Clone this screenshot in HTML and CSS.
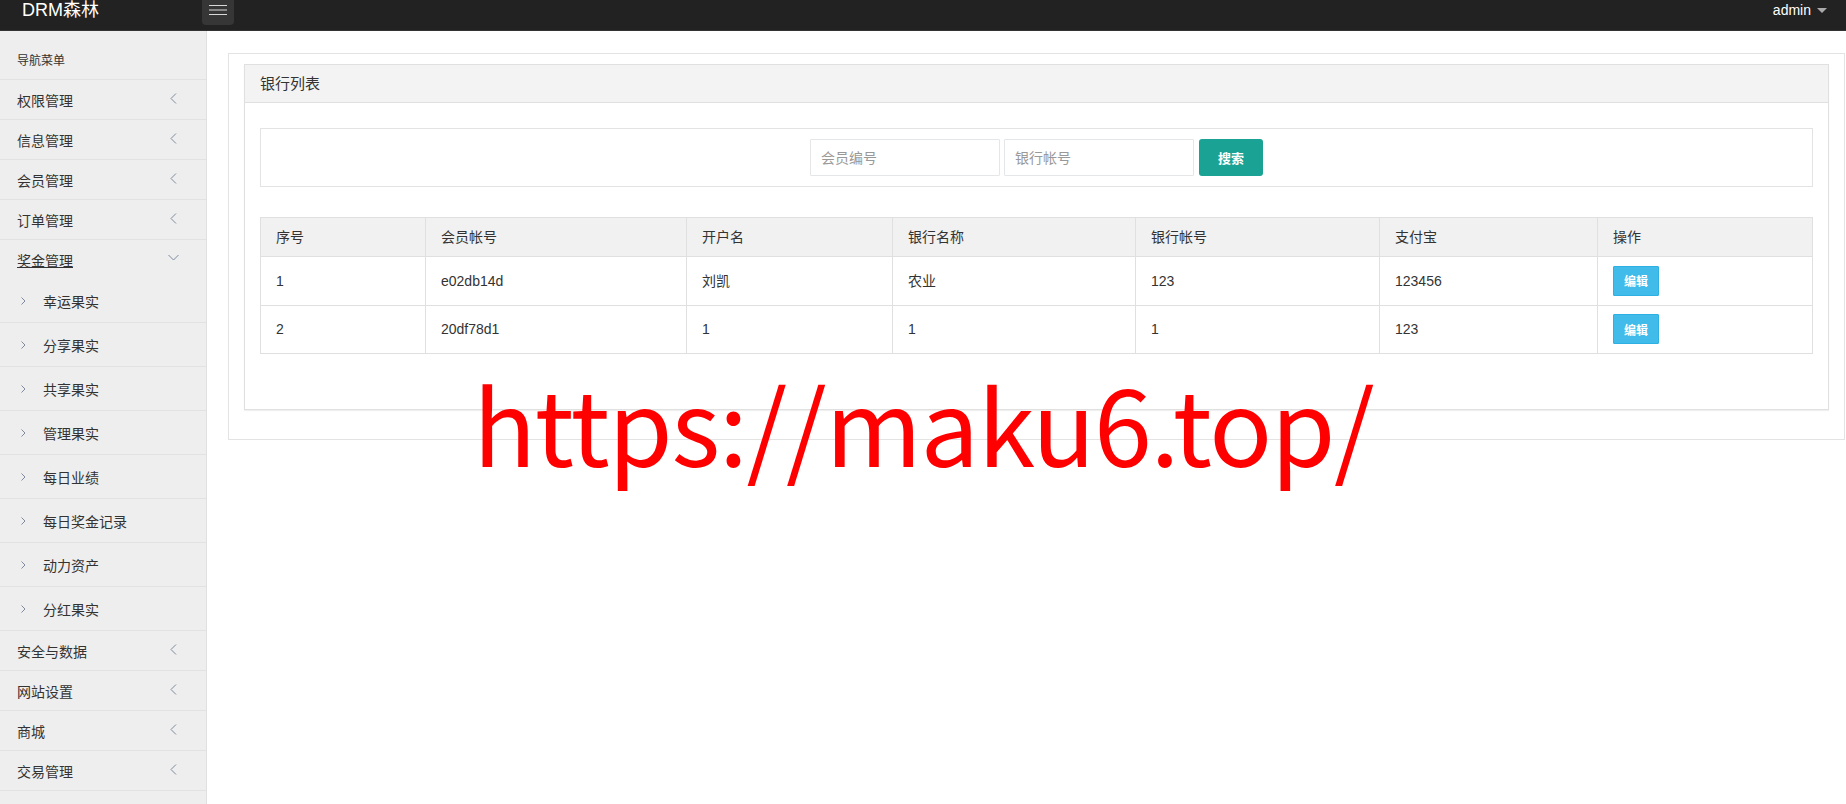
FILE: index.html
```html
<!DOCTYPE html>
<html lang="zh-CN">
<head>
  <meta charset="UTF-8">
  <title>DRM森林 - 银行列表</title>
  <link rel="stylesheet" href="styles.css">
</head>
<body>

  <header class="topbar">
    <a href="#" class="brand">DRM森林</a>
    <button type="button" class="nav-toggle">
      <svg width="18" height="11" viewBox="0 0 18 11">
        <path d="M0 0.5H18M0 5H18M0 9.5H18" stroke="#d8d8d8" stroke-width="1.2"/>
      </svg>
    </button>
    <div class="user">admin<span class="caret"></span></div>
  </header>

  <div class="layout">
    <aside class="sidebar">
      <div class="nav-title">导航菜单</div>
      <ul class="nav">
        <li class="nav-item"><a href="#"><span>权限管理</span><svg class="arrow" width="7" height="11" viewBox="0 0 7 11"><path d="M6 0.5L1 5.5L6 10.5"/></svg></a></li>
        <li class="nav-item"><a href="#"><span>信息管理</span><svg class="arrow" width="7" height="11" viewBox="0 0 7 11"><path d="M6 0.5L1 5.5L6 10.5"/></svg></a></li>
        <li class="nav-item"><a href="#"><span>会员管理</span><svg class="arrow" width="7" height="11" viewBox="0 0 7 11"><path d="M6 0.5L1 5.5L6 10.5"/></svg></a></li>
        <li class="nav-item"><a href="#"><span>订单管理</span><svg class="arrow" width="7" height="11" viewBox="0 0 7 11"><path d="M6 0.5L1 5.5L6 10.5"/></svg></a></li>
        <li class="nav-item open">
          <a href="#"><span class="current">奖金管理</span><svg class="arrow-down" width="11" height="7" viewBox="0 0 11 7"><path d="M0.5 1L5.5 6L10.5 1"/></svg></a>
          <ul class="sub-nav">
            <li><a href="#"><svg width="5" height="8" viewBox="0 0 5 8"><path d="M0.5 0.5L4 4L0.5 7.5"/></svg>幸运果实</a></li>
            <li><a href="#"><svg width="5" height="8" viewBox="0 0 5 8"><path d="M0.5 0.5L4 4L0.5 7.5"/></svg>分享果实</a></li>
            <li><a href="#"><svg width="5" height="8" viewBox="0 0 5 8"><path d="M0.5 0.5L4 4L0.5 7.5"/></svg>共享果实</a></li>
            <li><a href="#"><svg width="5" height="8" viewBox="0 0 5 8"><path d="M0.5 0.5L4 4L0.5 7.5"/></svg>管理果实</a></li>
            <li><a href="#"><svg width="5" height="8" viewBox="0 0 5 8"><path d="M0.5 0.5L4 4L0.5 7.5"/></svg>每日业绩</a></li>
            <li><a href="#"><svg width="5" height="8" viewBox="0 0 5 8"><path d="M0.5 0.5L4 4L0.5 7.5"/></svg>每日奖金记录</a></li>
            <li><a href="#"><svg width="5" height="8" viewBox="0 0 5 8"><path d="M0.5 0.5L4 4L0.5 7.5"/></svg>动力资产</a></li>
            <li><a href="#"><svg width="5" height="8" viewBox="0 0 5 8"><path d="M0.5 0.5L4 4L0.5 7.5"/></svg>分红果实</a></li>
          </ul>
        </li>
        <li class="nav-item"><a href="#"><span>安全与数据</span><svg class="arrow" width="7" height="11" viewBox="0 0 7 11"><path d="M6 0.5L1 5.5L6 10.5"/></svg></a></li>
        <li class="nav-item"><a href="#"><span>网站设置</span><svg class="arrow" width="7" height="11" viewBox="0 0 7 11"><path d="M6 0.5L1 5.5L6 10.5"/></svg></a></li>
        <li class="nav-item"><a href="#"><span>商城</span><svg class="arrow" width="7" height="11" viewBox="0 0 7 11"><path d="M6 0.5L1 5.5L6 10.5"/></svg></a></li>
        <li class="nav-item"><a href="#"><span>交易管理</span><svg class="arrow" width="7" height="11" viewBox="0 0 7 11"><path d="M6 0.5L1 5.5L6 10.5"/></svg></a></li>
      </ul>
    </aside>

    <main class="content">
      <div class="wrapper">
        <div class="panel">
          <div class="panel-heading">银行列表</div>
          <div class="panel-body">
            <form class="search-bar">
              <input type="text" placeholder="会员编号">
              <input type="text" placeholder="银行帐号">
              <button type="submit" class="btn-search">搜索</button>
            </form>

            <table class="data-table">
              <colgroup>
                <col class="c-id"><col class="c-user"><col class="c-name"><col class="c-bank"><col class="c-account"><col class="c-alipay"><col>
              </colgroup>
              <thead>
                <tr><th>序号</th><th>会员帐号</th><th>开户名</th><th>银行名称</th><th>银行帐号</th><th>支付宝</th><th>操作</th></tr>
              </thead>
              <tbody>
                <tr><td>1</td><td>e02db14d</td><td>刘凯</td><td>农业</td><td>123</td><td>123456</td><td><button type="button" class="btn-edit">编辑</button></td></tr>
                <tr><td>2</td><td>20df78d1</td><td>1</td><td>1</td><td>1</td><td>123</td><td><button type="button" class="btn-edit">编辑</button></td></tr>
              </tbody>
            </table>
          </div>
        </div>
      </div>
    </main>
  </div>

  <div class="watermark">https://maku6.top/</div>

</body>
</html>
```

FILE: styles.css
```css
* {
  margin: 0;
  padding: 0;
  box-sizing: border-box;
}

body {
  font-family: "Liberation Sans", "Noto Sans CJK SC", sans-serif;
  font-size: 14px;
  color: #333;
  background-color: #fff;
  height: 100vh;
  display: flex;
  flex-direction: column;
  overflow: hidden;
}

a {
  color: #333;
  text-decoration: none;
}

/* top bar */
.topbar {
  height: 31px;
  background-color: #222;
  border-bottom: 1px solid #333;
  display: flex;
  align-items: flex-start;
}

.brand {
  width: 202px;
  padding-left: 22px;
  font-size: 18px;
  line-height: 20px;
  color: #fff;
}

.nav-toggle {
  width: 32px;
  height: 25px;
  border: none;
  border-radius: 0 0 4px 4px;
  background-color: #363636;
  display: flex;
  justify-content: center;
  padding-top: 5px;
}

.user {
  margin-left: auto;
  padding-right: 19px;
  height: 20px;
  display: flex;
  align-items: center;
  color: #fff;
  font-size: 14px;
}

.caret {
  margin-left: 6px;
  border-top: 5px solid #aaa;
  border-left: 5px solid transparent;
  border-right: 5px solid transparent;
}

/* layout */
.layout {
  flex: 1;
  display: flex;
  min-height: 0;
}

/* sidebar */
.sidebar {
  width: 207px;
  flex-shrink: 0;
  background-color: #eee;
  border-right: 1px solid #e0e0e0;
}

.nav-title {
  padding: 22px 17px 9px;
  font-size: 12px;
  line-height: 17px;
  border-bottom: 1px solid #e2e2e2;
}

.nav, .sub-nav {
  list-style: none;
}

.nav-item > a {
  height: 40px;
  padding: 0 29px 0 17px;
  display: flex;
  align-items: center;
  justify-content: space-between;
  border-bottom: 1px solid #e2e2e2;
}

.nav-item.open > a {
  height: 39px;
  border-bottom: none;
}

.current {
  text-decoration: underline;
}

.arrow {
  margin-bottom: 3px;
  fill: none;
  stroke: #7f8a9e;
  stroke-width: 1;
}

.arrow-down {
  margin-right: -2px;
  margin-bottom: 5px;
  fill: none;
  stroke: #7f8a9e;
  stroke-width: 1;
}

.sub-nav a {
  height: 44px;
  padding-left: 21px;
  display: flex;
  align-items: center;
  border-bottom: 1px solid #e2e2e2;
}

.sub-nav svg {
  margin-right: 17px;
  fill: none;
  stroke: #7f8a9e;
  stroke-width: 1;
}

/* main content */
.content {
  flex: 1;
  padding: 22px 1px 0 21px;
}

.wrapper {
  border: 1px solid #e3e3e3;
  padding: 10px 15px 9px;
}

.panel {
  border: 1px solid #e0e0e0;
  margin-bottom: 20px;
  box-shadow: 0 1px 1px rgba(0, 0, 0, 0.06);
}

.panel-heading {
  height: 38px;
  padding: 0 15px;
  line-height: 37px;
  font-size: 15px;
  background-color: #f3f3f3;
  border-bottom: 1px solid #e0e0e0;
}

.panel-body {
  padding: 25px 15px 15px;
}

.search-bar {
  border: 1px solid #e3e3e3;
  padding: 10px;
  display: flex;
  justify-content: center;
  gap: 4px;
}

.search-bar input {
  width: 190px;
  height: 37px;
  padding: 6px 10px;
  border: 1px solid #e5e6e7;
  border-radius: 1px;
  font-family: inherit;
  font-size: 14px;
  color: #333;
}

.search-bar input::placeholder {
  color: #999;
}

.btn-search {
  margin-left: 1px;
  width: 64px;
  height: 37px;
  border: none;
  border-radius: 3px;
  background-color: #1aa394;
  color: #fff;
  font-family: inherit;
  font-size: 13px;
  font-weight: bold;
  cursor: pointer;
}

/* table */
.data-table {
  width: 100%;
  margin: 30px 0 40px;
  border-collapse: collapse;
  table-layout: fixed;
}

.c-id { width: 165px; }
.c-user { width: 261px; }
.c-name { width: 206px; }
.c-bank { width: 243px; }
.c-account { width: 244px; }
.c-alipay { width: 218px; }

.data-table th,
.data-table td {
  padding: 0 15px;
  border: 1px solid #e0e0e0;
  text-align: left;
  line-height: 20px;
  vertical-align: middle;
}

.data-table th {
  height: 39px;
  font-weight: normal;
  background-color: #f1f1f1;
}

.data-table td {
  height: 48.5px;
}

.btn-edit {
  width: 46px;
  height: 30px;
  border: 1px solid #2fb0e2;
  border-radius: 1px;
  background-color: #41bbea;
  color: #fff;
  font-family: inherit;
  font-size: 12px;
  font-weight: bold;
  cursor: pointer;
}

/* site address stamped over the page */
.watermark {
  position: absolute;
  left: 473px;
  top: 370px;
  font-family: "Noto Sans CJK SC", sans-serif;
  font-size: 104px;
  letter-spacing: -1.3px;
  line-height: 1;
  color: #ff0000;
  white-space: nowrap;
  pointer-events: none;
}
```
